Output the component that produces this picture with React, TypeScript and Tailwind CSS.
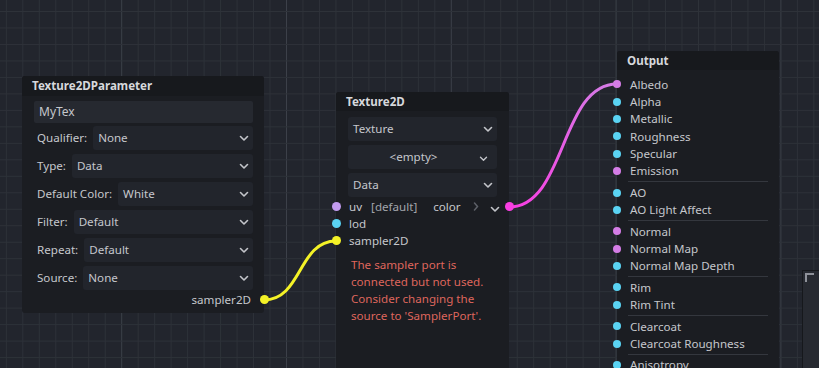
import React from "react";

const FONT = { fontFamily: '"Noto Sans", "Open Sans", sans-serif' };

const PARAM_ROWS = [
  { label: "Qualifier:", value: "None" },
  { label: "Type:", value: "Data" },
  { label: "Default Color:", value: "White" },
  { label: "Filter:", value: "Default" },
  { label: "Repeat:", value: "Default" },
  { label: "Source:", value: "None" },
];

const CYAN = "bg-[#5ad3f3]";
const PURPLE = "bg-[#d47de6]";

const OUTPUT_GROUPS = [
  [
    { name: "Albedo", dot: PURPLE },
    { name: "Alpha", dot: CYAN },
    { name: "Metallic", dot: CYAN },
    { name: "Roughness", dot: CYAN },
    { name: "Specular", dot: CYAN },
    { name: "Emission", dot: PURPLE },
  ],
  [
    { name: "AO", dot: CYAN },
    { name: "AO Light Affect", dot: CYAN },
  ],
  [
    { name: "Normal", dot: PURPLE },
    { name: "Normal Map", dot: PURPLE },
    { name: "Normal Map Depth", dot: CYAN },
  ],
  [
    { name: "Rim", dot: CYAN },
    { name: "Rim Tint", dot: CYAN },
  ],
  [
    { name: "Clearcoat", dot: CYAN },
    { name: "Clearcoat Roughness", dot: CYAN },
  ],
  [{ name: "Anisotropy", dot: CYAN }],
];

function Chevron({ small }: { small?: boolean }) {
  return (
    <svg width={small ? 9 : 10} height={small ? 6 : 7} viewBox="0 0 10 7" fill="none">
      <path d="M1.5 1.5 L5 5 L8.5 1.5" stroke="#c3c5ca" strokeWidth="1.6" strokeLinecap="round" strokeLinejoin="round" />
    </svg>
  );
}

function Select({ value, grow }: { value: string; grow?: boolean }) {
  return (
    <div className={`${grow ? "flex-1" : "w-full"} h-6 bg-[#22252c] rounded-[3px] flex items-center pl-[5px] pr-[4px]`}>
      <span className="flex-1">{value}</span>
      <Chevron />
    </div>
  );
}

function Grid() {
  // canvas grid, every 10th vertical line brighter
  const step = 16.48;
  const xs: number[] = [];
  const ys: number[] = [];
  for (let i = 0; i < 51; i++) xs.push(6.34 + i * step);
  for (let i = 0; i < 24; i++) ys.push(11.5 + i * step);
  return (
    <svg className="absolute inset-0" width="819" height="368">
      {xs.map((x, i) => (
        <line key={"v" + i} x1={x} y1={0} x2={x} y2={368} stroke={i % 10 === 7 ? "#3c4049" : "#2e3239"} strokeWidth="1" />
      ))}
      {ys.map((y, i) => (
        <line key={"h" + i} x1={0} y1={y} x2={819} y2={y} stroke="#2e3239" strokeWidth="1" />
      ))}
    </svg>
  );
}

function Wires() {
  return (
    <svg className="absolute inset-0" width="819" height="368">
      <defs>
        <linearGradient id="mag" x1="509" y1="207" x2="617" y2="84" gradientUnits="userSpaceOnUse">
          <stop offset="0" stopColor="#f83ee2" />
          <stop offset="1" stopColor="#d47de6" />
        </linearGradient>
      </defs>
      <path d="M264 300 C302 300 298 241 336 241" stroke="#f4f227" strokeWidth="3" fill="none" />
      <path d="M509 207 C566 207 560 84 617 84" stroke="url(#mag)" strokeWidth="3" fill="none" />
    </svg>
  );
}

export default function App() {
  return (
    <div className="relative w-[819px] h-[368px] overflow-hidden bg-[#22252d] text-[11.6px] text-[#c5c7cc]" style={FONT}>
      <Grid />
      <Wires />

      {/* Texture2DParameter */}
      <div className="absolute left-[22px] top-[76px] w-[242px] h-[237px] bg-[#1b1d22] rounded-[3px] flex flex-col">
        <div className="h-5 shrink-0 bg-[#17191d] rounded-t-[3px] px-[10px] flex items-center font-bold text-[#d6d8dc]">Texture2DParameter</div>
        <div className="flex flex-col pl-[12px] pr-[11px] pt-[5px]">
          <div className="h-[22px] bg-[#262930] rounded-[2px] flex items-center pl-[5px] text-[12px]">MyTex</div>
          <div className="flex flex-col gap-1 mt-[3px]">
            {PARAM_ROWS.map((r) => (
              <div key={r.label} className="flex items-center gap-[6px] pl-[3px]">
                <span>{r.label}</span>
                <Select value={r.value} grow />
              </div>
            ))}
          </div>
          <div className="relative h-[19px] flex items-center justify-end pr-[2px]">
            sampler2D
            <span className="absolute right-[-15.5px] w-[9px] h-[9px] rounded-full bg-[#f4f227]" />
          </div>
        </div>
      </div>

      {/* Texture2D */}
      <div className="absolute left-[336px] top-[92px] w-[173px] h-[300px] bg-[#1b1d22] rounded-[3px] flex flex-col">
        <div className="h-[19px] shrink-0 bg-[#17191d] rounded-t-[3px] px-[10px] flex items-center font-bold text-[#d6d8dc]">Texture2D</div>
        <div className="flex flex-col gap-1 px-[12px] pt-[6px]">
          <Select value="Texture" />
          <div className="w-full h-6 bg-[#22252c] rounded-[3px] flex items-center pr-[9px]">
            <span className="flex-1 text-center">&lt;empty&gt;</span>
            <span className="pt-[3px]"><Chevron small /></span>
          </div>
          <Select value="Data" />
        </div>
        <div className="flex flex-col mt-[1px]">
          <div className="relative h-[17px] flex items-center pl-[13px]">
            <span className="absolute left-[-4px] w-[9px] h-[9px] rounded-full bg-[#c39cf0]" />
            <span>uv</span>
            <span className="ml-[9px] text-[#a2a5ab]">[default]</span>
            <span className="ml-[16px]">color</span>
            <svg width="6" height="9" viewBox="0 0 6 9" className="ml-[12px]">
              <path d="M1.5 1 L4.5 4.5 L1.5 8" stroke="#5d6068" strokeWidth="1.5" fill="none" strokeLinecap="round" />
            </svg>
            <span className="ml-[11px] pt-[5px]"><Chevron /></span>
            <span className="absolute right-[-4.5px] w-[9px] h-[9px] rounded-full bg-[#f83ee2]" />
          </div>
          <div className="relative h-[17px] flex items-center pl-[13px]">
            <span className="absolute left-[-4px] w-[9px] h-[9px] rounded-full bg-[#5ad3f3]" />
            lod
          </div>
          <div className="relative h-[17px] flex items-center pl-[13px]">
            <span className="absolute left-[-4px] w-[9px] h-[9px] rounded-full bg-[#f4f227]" />
            sampler2D
          </div>
          <p className="mt-[7px] pl-[15px] pr-[4px] leading-[17px] text-[#df665d]">
            The sampler port is
            <br />
            connected but not used.
            <br />
            Consider changing the
            <br />
            source to 'SamplerPort'.
          </p>
        </div>
      </div>

      {/* Output */}
      <div className="absolute left-[617px] top-[51px] w-[162px] h-[340px] bg-[#1b1d22] rounded-[3px] flex flex-col">
        <div className="h-[19px] shrink-0 bg-[#17191d] rounded-t-[3px] px-[10px] flex items-center font-bold text-[#d6d8dc]">Output</div>
        <div className="flex flex-col pt-[5.5px]">
          {OUTPUT_GROUPS.map((g, gi) => (
            <div key={gi} className="flex flex-col">
              {gi > 0 && <div className="h-px bg-[#34373e] mx-[11px] my-[1.5px]" />}
              {g.map((p) => (
                <div key={p.name} className="relative h-[17.4px] shrink-0 flex items-center pl-[13px]">
                  <span className={`absolute left-[-4px] w-[8px] h-[8px] rounded-full ${p.dot}`} />
                  {p.name}
                </div>
              ))}
            </div>
          ))}
        </div>
      </div>

      {/* partial panel at right edge */}
      <div className="absolute left-[802px] top-[270px] w-[30px] h-[110px] bg-[#272a31] border border-[#16181c]">
        <svg width="10" height="10" className="absolute left-[2px] top-[2px]">
          <path d="M1 9 V1 H9" stroke="#8e9199" strokeWidth="2" fill="none" />
        </svg>
      </div>
    </div>
  );
}
